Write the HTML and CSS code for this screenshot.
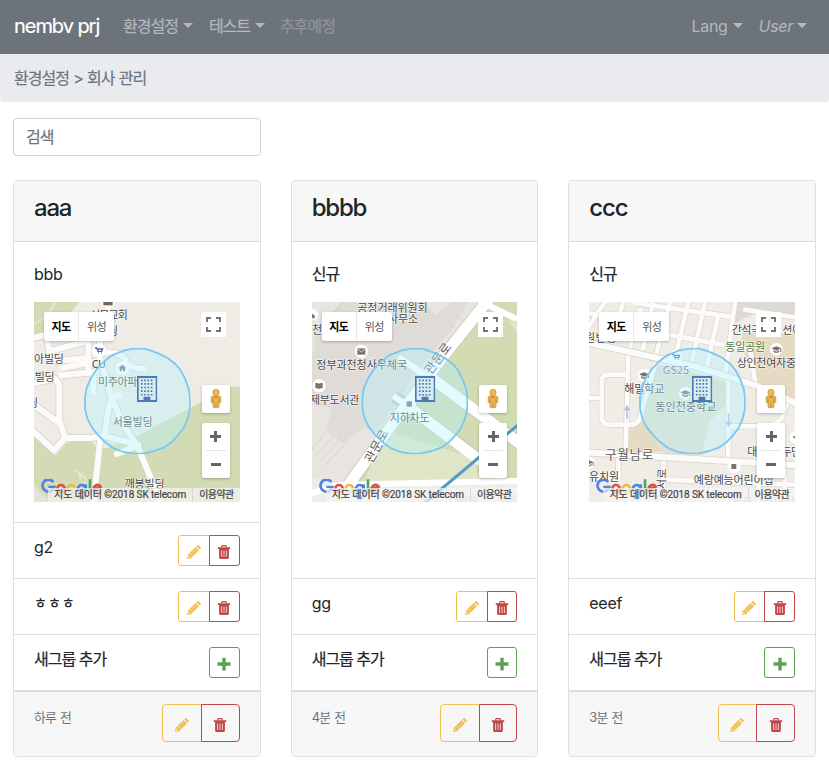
FILE: index.html
```html
<!DOCTYPE html>
<html lang="ko">
<head>
<meta charset="utf-8">
<title>nembv prj</title>
<link rel="stylesheet" href="styles.css">
</head>
<body>
<svg class="sprite" width="0" height="0" aria-hidden="true">
  <symbol id="pencil" viewBox="0 0 14 14"><path fill="currentColor" d="M0 14l.8-4.300L3 8l3 3-1.700 2.300zM2.900 7.600L8.700 2l3.300 3.300-5.700 5.700zM9.400 1.400L10.500.3q.5-.5 1.100 0L13.700 2.400q.5.600 0 1.200L12.700 4.600z"/><path d="M4.400 8.900L10 3.500" stroke="#fff" stroke-width=".5" opacity=".55"/><circle cx="1.900" cy="12" r=".8" fill="#fff"/></symbol>
  <symbol id="trash" viewBox="0 0 14 14"><path fill="none" stroke="currentColor" stroke-width="1.200" d="M4.700 2.500V1.400Q4.700.7 5.400.7H8.600Q9.300.7 9.300 1.400V2.500"/><path fill="currentColor" d="M.8 2.300H13.200V4.100H.8zM2.100 4.100H11.900V12.600Q11.900 14 10.600 14H3.400Q2.100 14 2.100 12.600z"/><path d="M4.600 5.500V12M7 5.500V12M9.400 5.500V12" stroke="#fff" stroke-width="1" opacity=".75"/></symbol>
  <symbol id="plus" viewBox="0 0 14 14"><path fill="currentColor" d="M5.300.8h3.400v4.500h4.800v3.400H8.700v4.800H5.300V8.700H.5V5.300h4.800z"/></symbol>
  <symbol id="full" viewBox="0 0 25 25"><path fill="none" stroke="#757575" stroke-width="2" d="M6 10V6h4M15 6h4v4M19 15v4h-4M10 19H6v-4"/></symbol>
  <symbol id="pegman" viewBox="0 0 28 28"><path fill="#e9b44c" stroke="#bd8a3c" stroke-width=".6" d="M10.600 11h6.800q1.400 0 1.400 1.600v5h-1.500l-.5 5h-5.600l-.5-5H9.200v-5q0-1.600 1.400-1.600z"/><path d="M14 17.500v5M11.100 13.500v4M16.900 13.500v4" stroke="#b37e34" stroke-width=".7"/><path d="M11.700 11.300l2.300 2.200 2.300-2.200" fill="#dd7c37"/><circle cx="14" cy="7.400" r="3.200" fill="#ecb955" stroke="#bd8a3c" stroke-width=".6"/></symbol>
  <symbol id="glogo" viewBox="0 0 186 66"><g fill="none" stroke-width="8"><path stroke="#4e82e8" d="M38 9A18 18 0 1 0 41 24H23"/><circle cx="61" cy="29" r="11" stroke="#dc5145"/><circle cx="92" cy="29" r="11" stroke="#edbb3c"/><path stroke="#4e82e8" d="M135 16v28q0 13-12 13-9 0-12-8"/><circle cx="123" cy="29" r="11" stroke="#4e82e8"/><path stroke="#4ca85b" d="M148 1v41"/><path stroke="#dc5145" d="M158 32l22-9q-5-7-12-5-10 4-9 14 3 9 12 8 7-1 10-7"/></g></symbol>
  <symbol id="area" viewBox="0 0 320 320"><path d="M121 8L149 3H181L205 10L229 20L251 31L274 49L290 68L303 93L314 123L318 150V183L311 213L299 241L282 263L262 284L239 300L211 310L180 317L149 318L118 313L89 302L64 284L43 263L24 240L10 213L3 182L3 149L8 120L21 91L38 65L58 43L82 24z" fill="#b2f4ff" fill-opacity=".36" stroke="#7bc7f2" stroke-width="5.500" stroke-linejoin="round"/></symbol>
  <symbol id="building" viewBox="0 0 62 80"><path fill="#4a7bb4" d="M0 0h62v80H0z"/><path fill="#d9edf0" d="M5 7h52v67H41V64H20v10H5z"/><path stroke="#4c72b0" stroke-width="5" stroke-dasharray="5 5" d="M12 14h40M12 25h40M12 36h40M12 47h40M12 58h40"/><path fill="#4a7bb4" d="M23 66h15v9H23z"/></symbol>
  <symbol id="cap" viewBox="0 0 40 40"><circle cx="20" cy="20" r="19" fill="#fff"/><path fill="#80706a" d="M5 17L20 11 35 17 20 24zM11 22l9 5 9-5v5q-9 7-18 0zM32 18h3v10h-3z"/></symbol>
</svg>

<nav class="navbar">
  <a class="brand">nembv prj</a>
  <div class="menu">
    <a class="link ko drop">환경설정</a>
    <a class="link ko drop">테스트</a>
    <a class="link ko off">추후예정</a>
  </div>
  <div class="menu end">
    <a class="link drop">Lang</a>
    <a class="link drop user"><i>User</i></a>
  </div>
</nav>
<div class="crumb ko">환경설정 &gt; 회사 관리</div>

<main>
  <input class="search ko" type="text" placeholder="검색">
  <section class="deck">

    <article class="card">
      <header><h4>aaa</h4></header>
      <div class="body">
        <p>bbb</p>
        <div class="map">
          <svg class="canvas" viewBox="12 12 617 600" preserveAspectRatio="none">
            <path fill="#efece6" d="M0 0h640v620H0z"/>
            <path fill="#d2dbb3" d="M12 12H148L100 68 12 128zM640 266H600L320 415 230 450H205L170 418 108 436 76 474 12 415V620H640z"/>
            <path fill="none" stroke="#dfe3cb" stroke-width="8" d="M75 12Q55 60 12 78"/>
            <path fill="#e2e1da" d="M12 560l50 52H12z"/>
            <path class="edge" d="M238 12L205 160 225 235 245 300 275 370 325 450 395 620M215 165Q262 158 285 182 290 210 340 212M0 124L50 110 58 160 175 128V225M50 112L110 92M62 168L80 190 170 180M98 210L200 190M95 232L195 222M12 255L75 242 88 260V365L105 420H185L225 412M12 320L87 375M0 390L72 458 105 420M190 620L210 430M190 225V280M245 300Q230 340 225 415L325 440"/>
            <path class="way" d="M238 12L205 160 225 235 245 300 275 370 325 450 395 620M215 165Q262 158 285 182 290 210 340 212M0 124L50 110 58 160 175 128V225M50 112L110 92M62 168L80 190 170 180M98 210L200 190M95 232L195 222M12 255L75 242 88 260V365L105 420H185L225 412M12 320L87 375M0 390L72 458 105 420M190 620L210 430M190 225V280M245 300Q230 340 225 415L325 440M245 294L268 292M260 468L325 442"/>
            <path fill="none" stroke="#e7e9d5" stroke-width="5" d="M135 515L170 545M150 545V530M160 550L205 580"/>
            <circle cx="234" cy="12" r="20" fill="#fff"/><path fill="#79615c" d="M220 8h28v14H220z"/>
            <circle cx="206" cy="157" r="21" fill="#fff"/><path d="M195 150h5l4 10h11l3-7h-16M204 165h2m8 0h2" fill="none" stroke="#5364b5" stroke-width="4"/>
            <circle cx="277" cy="210" r="20" fill="#fff"/><path fill="#777" d="M265 211l12-11 12 11h-4v9h-6v-7h-4v7h-6v-9z"/>
            <g class="label"><text x="180" y="63" textLength="114">서문교회</text><text x="234" y="110">딩</text><text x="12" y="194" textLength="90">아빌딩</text><text x="14" y="248" textLength="60">빌딩</text><text x="-6" y="326">딩</text><text x="185" y="210" textLength="43">CU</text><text x="204" y="264" textLength="147">미주아파트</text><text x="248" y="385" textLength="120">서울빌딩</text><text x="284" y="569" textLength="120">깨봉빌딩</text></g>
            <use href="#area" x="162" y="149" width="320" height="320"/>
            <use href="#building" x="321" y="233" width="61" height="79"/>
            <use href="#glogo" x="32" y="543" width="186" height="66"/>
          </svg>
          <div class="types"><b>지도</b><span>위성</span></div>
          <svg class="full"><use href="#full"/></svg>
          <svg class="peg"><use href="#pegman"/></svg>
          <div class="zoom"><i></i><i></i></div>
          <div class="legal"><span>지도 데이터 ©2018 SK telecom</span><span>이용약관</span></div>
        </div>
      </div>
      <ul>
        <li><span>g2</span><div class="group"><button class="edit"><svg><use href="#pencil"/></svg></button><button class="del"><svg><use href="#trash"/></svg></button></div></li>
        <li><span class="jamo">ㅎㅎㅎ</span><div class="group"><button class="edit"><svg><use href="#pencil"/></svg></button><button class="del"><svg><use href="#trash"/></svg></button></div></li>
        <li><span class="ko">새그룹 추가</span><button class="add"><svg><use href="#plus"/></svg></button></li>
      </ul>
      <footer><small>하루 전</small><div class="group large"><button class="edit"><svg><use href="#pencil"/></svg></button><button class="del"><svg><use href="#trash"/></svg></button></div></footer>
    </article>

    <article class="card">
      <header><h4>bbbb</h4></header>
      <div class="body">
        <p class="ko">신규</p>
        <div class="map">
          <svg class="canvas" viewBox="12 12 617 600" preserveAspectRatio="none">
            <path fill="#e8e5e0" d="M0 0h640v620H0z"/>
            <path fill="#dfdbd7" d="M30 80L105 12H480L435 90 350 190 305 250 275 310 200 400 165 390 105 435 55 400 70 330 12 320V180z"/>
            <path fill="#e8e5e0" d="M340 12l45 40 45-40zM12 330l60 15-28 48 52 45-75 75z"/>
            <path fill="#d2dbb1" d="M535 12H640V545L110 600 230 400 330 290 380 220z"/>
            <path fill="#dfe5c7" d="M235 400L500 480 515 550 150 590zM600 70h40v50z"/>
            <path fill="#efede8" d="M12 540L120 560 640 545V620H12z"/>
            <g fill="none" stroke="#cfccc5" stroke-width="2"><path d="M12 455l40-50M22 475l55-60M35 490l65-70M48 505l75-80M430 40l40 35M410 65l35 30M225 12l55 70M105 12L40 90M140 115L190 140"/></g>
            <path fill="none" stroke="#c9c8be" stroke-width="38" d="M545 0L410 170 270 355 100 590M370 240L640 440M260 295L510 480"/>
            <path fill="none" stroke="#fff" stroke-width="33" d="M545 0L410 170 270 355 100 590M370 240L640 440M300 325L520 490"/>
            <path fill="none" stroke="#fff" stroke-width="18" stroke-linecap="round" d="M278 182L380 250M262 298L310 330M12 585L100 560 640 548M520 12L620 60"/>
            <path stroke="#519bc6" stroke-width="9" d="M350 615L640 372"/>
            <path fill="#cad5f4" d="M440 595h70v17h-70zM580 590h48v22h-48z"/>
            <circle cx="160" cy="160" r="20" fill="#fff"/><path fill="#80706a" d="M148 151h24v19h-24z"/><path fill="none" stroke="#fff" stroke-width="2" d="M149 153l11 9 11-9"/>
            <circle cx="33" cy="263" r="20" fill="#fff"/><path fill="#80706a" d="M22 255q8-1 11 2 4-3 11-2v16q-7-1-11 2-4-3-11-2z"/>
            <circle cx="14" cy="50" r="17" fill="#fff"/><path fill="#80706a" d="M12 47l8 5v9h-8z"/>
            <circle cx="304" cy="318" r="20" fill="#fff"/><path fill="#777" d="M296 310h16v16h-16z"/>
            <g class="label"><text x="148" y="42" textLength="211">공정거래위원회</text><text x="240" y="76" textLength="90">사무소</text><text x="12" y="107">천</text><text x="25" y="214" textLength="272">정부과천청사우체국</text><text x="6" y="317" textLength="148">제부도서관</text><text x="245" y="371" textLength="120">지하차도</text><text class="road" transform="translate(368 232) rotate(-53)" textLength="107">관문로</text><text class="road" transform="translate(192 498) rotate(-62)" textLength="107">관문로</text></g>
            <use href="#area" x="160" y="149" width="320" height="320"/>
            <use href="#building" x="321" y="233" width="61" height="79"/>
            <use href="#glogo" x="32" y="543" width="186" height="66"/>
          </svg>
          <div class="types"><b>지도</b><span>위성</span></div>
          <svg class="full"><use href="#full"/></svg>
          <svg class="peg"><use href="#pegman"/></svg>
          <div class="zoom"><i></i><i></i></div>
          <div class="legal"><span>지도 데이터 ©2018 SK telecom</span><span>이용약관</span></div>
        </div>
      </div>
      <ul>
        <li><span>gg</span><div class="group"><button class="edit"><svg><use href="#pencil"/></svg></button><button class="del"><svg><use href="#trash"/></svg></button></div></li>
        <li><span class="ko">새그룹 추가</span><button class="add"><svg><use href="#plus"/></svg></button></li>
      </ul>
      <footer><small>4분 전</small><div class="group large"><button class="edit"><svg><use href="#pencil"/></svg></button><button class="del"><svg><use href="#trash"/></svg></button></div></footer>
    </article>

    <article class="card">
      <header><h4>ccc</h4></header>
      <div class="body">
        <p class="ko">신규</p>
        <div class="map">
          <svg class="canvas" viewBox="12 12 617 600" preserveAspectRatio="none">
            <path fill="#f0ede7" d="M0 0h640v620H0z"/>
            <path fill="#e4dbc2" d="M145 170L210 185 200 300 170 370 130 385V462H250L350 462 375 370 430 310V255L300 215 225 200zM470 105L640 105V305L520 260 470 150z"/>
            <path fill="#e3dfcd" d="M225 205L385 260 430 290 375 370 350 470H240L200 420 175 340 205 250z"/>
            <path fill="#dddad5" d="M440 12H640V60L520 40 440 80z"/>
            <path class="edge thin" d="M12 45L50 55M60 12L12 85M115 12L75 140M165 40L135 150M205 12L175 150M255 12L215 165M310 12L270 180M360 12L320 195M400 50L365 210M450 12L420 235M150 15L430 55M90 55L240 90M250 110L410 140M210 200L170 340Q165 378 140 380H75Q48 380 50 350V250Q50 230 70 230H125M12 300H50M130 165L122 460M430 250V480M440 385H540Q575 380 590 360L610 310M480 35L640 60M430 140L495 155 510 250M235 480V612M520 495V612M12 535L75 545M245 545L629 560M100 480V540M600 510V612"/>
            <path class="way thin" d="M12 45L50 55M60 12L12 85M115 12L75 140M165 40L135 150M205 12L175 150M255 12L215 165M310 12L270 180M360 12L320 195M400 50L365 210M450 12L420 235M150 15L430 55M90 55L240 90M250 110L410 140M210 200L170 340Q165 378 140 380H75Q48 380 50 350V250Q50 230 70 230H125M12 300H50M130 165L122 460M430 250V480M440 385H540Q575 380 590 360L610 310M480 35L640 60M430 140L495 155 510 250M235 480V612M520 495V612M12 535L75 545M245 545L629 560M100 480V540M600 510V612"/>
            <path class="edge" d="M0 132L330 205 520 265 640 320M0 463L640 502"/>
            <path class="way" d="M0 132L330 205 520 265 640 320M0 463L640 502"/>
            <path fill="none" stroke="#b4bde4" stroke-width="5" d="M126 362v-35m-7 10l7-11 7 11M431 345v37m-7-10l7 11 7-11"/>
            <use href="#cap" x="157" y="212" width="40" height="40"/><use href="#cap" x="281" y="266" width="40" height="40"/><use href="#cap" x="554" y="134" width="40" height="40"/><use href="#cap" x="-9" y="475" width="40" height="40"/>
            <circle cx="272" cy="176" r="20" fill="#fff"/><path d="M261 169h5l4 10h11l3-7h-16M270 184h2m8 0h2" fill="none" stroke="#5364b5" stroke-width="4"/>
            <circle cx="447" cy="505" r="20" fill="#fff"/><path fill="#80706a" d="M439 498h15v15h-15z"/>
            <circle cx="635" cy="418" r="20" fill="#fff"/><path fill="#80706a" d="M623 417l10-5v12z"/>
            <g class="label"><text x="0" y="131" textLength="94">원빈딩</text><text x="440" y="109" textLength="88">간석극</text><text x="592" y="109" textLength="60">션어</text><text class="park" x="421" y="160" textLength="119">동일공원</text><text x="455" y="207" textLength="178">상인천여자중</text><text class="shop" x="233" y="228" textLength="79">GS25</text><text x="118" y="284" textLength="120">해밀학교</text><text x="211" y="339" textLength="183">동인천중학교</text><text class="road" x="60" y="482" textLength="145">구월남로</text><text x="487" y="473">대</text><text x="590" y="473" textLength="58">두먼</text><text x="12" y="549" textLength="90">유치원</text><text x="326" y="558" textLength="240">예랑예능어린이집</text><text transform="translate(241 574) rotate(-88)" textLength="62">서로</text><text class="faint" x="441" y="624" textLength="188">부오그레이리</text></g>
            <use href="#area" x="162" y="149" width="320" height="320"/>
            <use href="#building" x="321" y="233" width="61" height="79"/>
            <use href="#glogo" x="32" y="543" width="186" height="66"/>
          </svg>
          <div class="types"><b>지도</b><span>위성</span></div>
          <svg class="full"><use href="#full"/></svg>
          <svg class="peg"><use href="#pegman"/></svg>
          <div class="zoom"><i></i><i></i></div>
          <div class="legal"><span>지도 데이터 ©2018 SK telecom</span><span>이용약관</span></div>
        </div>
      </div>
      <ul>
        <li><span>eeef</span><div class="group"><button class="edit"><svg><use href="#pencil"/></svg></button><button class="del"><svg><use href="#trash"/></svg></button></div></li>
        <li><span class="ko">새그룹 추가</span><button class="add"><svg><use href="#plus"/></svg></button></li>
      </ul>
      <footer><small>3분 전</small><div class="group large"><button class="edit"><svg><use href="#pencil"/></svg></button><button class="del"><svg><use href="#trash"/></svg></button></div></footer>
    </article>
  </section>
</main>
</body>
</html>
```
FILE: styles.css
```css
* { box-sizing: border-box; }
body { margin: 0; background: #fff; color: #212529; font: 16px/24px Inter, "Noto Sans CJK KR", sans-serif; letter-spacing: -.3px; overflow: hidden; }
.sprite { position: absolute; }
.ko { letter-spacing: -1px; -webkit-text-stroke: .2px; }
.jamo { font-size: 14px; font-weight: 500; letter-spacing: 1px; }

.navbar { display: flex; align-items: center; height: 54px; padding: 0 22px 2px 14px; background: #6c737b; }
.brand { width: 109px; color: #fff; font-size: 20px; letter-spacing: -1.050px; white-space: nowrap; -webkit-text-stroke: .2px; }
.menu { display: flex; gap: 16px; }
.menu.end { margin-left: auto; }
.link { color: #b5b9bd; white-space: nowrap; }
.off { color: #90959b; margin-left: -1px; }
.drop::after { content: ""; display: inline-block; margin-left: 5px; vertical-align: 4px; border: 5px solid transparent; border-top-color: currentColor; border-bottom: 0; }
.user::after { margin-left: 4px; }

.crumb { height: 48px; padding: 12px 14px; background: #e9ebef; border-radius: 0 0 4px 4px; color: #6c757d; word-spacing: .8px; }

main { padding: 16px 13px 0; }
.search { display: block; width: 248px; height: 38px; margin: 0 0 24px; padding: 6px 12px; border: 1px solid #ced4da; border-radius: 4px; font-family: inherit; font-size: 16px; background: #fff; }
.search::placeholder { color: #6c757d; opacity: 1; }

.deck { display: grid; grid-template-columns: repeat(3, 1fr); gap: 30px; height: 577px; }
.card { display: flex; flex-direction: column; min-width: 0; border: 1px solid #dfdfdf; border-radius: 4px; overflow: hidden; }
.card header { height: 61px; padding: 12px 20px; background: #f7f7f7; border-bottom: 1px solid #dadbdb; }
h4 { margin: 0; font-size: 24px; line-height: 29px; font-weight: 500; letter-spacing: -1.200px; }
.body { flex: 1; padding: 20px 20px 0; }
.body p { margin: 0 0 16px; }

.map { position: relative; height: 200px; overflow: hidden; letter-spacing: 0; }
.canvas { display: block; width: 100%; height: 200px; }
.edge, .way { fill: none; stroke-linejoin: round; }
.edge { stroke: #d8d3cc; stroke-width: 23px; }
.way { stroke: #fcfbfa; stroke-width: 18px; stroke-linecap: round; }
.edge.thin { stroke-width: 18px; }
.way.thin { stroke-width: 14px; }
.label { font: 33px "Noto Sans CJK KR", sans-serif; fill: #484848; stroke: rgba(255,255,255,.7); stroke-width: 4px; paint-order: stroke; }
.road { font-size: 38px; fill: #5a5a5a; }
.park { fill: #527b48; }
.shop { fill: #5c6d95; }
.faint { opacity: .4; }
.types, .full, .peg, .zoom, .legal { position: absolute; }
.types { left: 10px; top: 10px; display: flex; height: 29px; background: #fff; border-radius: 2px; box-shadow: 0 1px 3px rgba(0,0,0,.25); font: 11px/28px "Noto Sans CJK KR", sans-serif; text-align: center; letter-spacing: -.6px; }
.types b { width: 34px; color: #000; }
.types span { width: 36px; color: #565656; border-left: 1px solid #e8e8e8; }
.full { right: 14px; top: 10px; width: 25px; height: 25px; background: #fff; }
.peg { right: 10px; top: 83px; width: 28px; height: 28px; background: #fff; border-radius: 2px; box-shadow: 0 1px 3px rgba(0,0,0,.25); }
.zoom { right: 10px; top: 121px; width: 28px; height: 55px; padding: 0 4px; background: #fff; border-radius: 2px; box-shadow: 0 1px 3px rgba(0,0,0,.25); }
.zoom i { display: block; height: 27px; background: linear-gradient(#666, #666) center/10px 3px no-repeat; }
.zoom i:first-child { height: 28px; border-bottom: 1px solid #e6e6e6; background: linear-gradient(#666, #666) center/11px 3px no-repeat, linear-gradient(#666, #666) center/3px 11px no-repeat; }
.legal { right: 0; bottom: 0; display: flex; font: 10px/14px Roboto, "Noto Sans CJK KR", sans-serif; color: #444; white-space: nowrap; }
.legal span { height: 14px; padding: 0 6px; background: rgba(245,245,245,.7); letter-spacing: -.1px; -webkit-text-stroke: .2px; }
.legal span:last-child { border-left: 1px solid rgba(200,200,200,.6); letter-spacing: -.6px; }

ul { margin: 0; padding: 0; list-style: none; border-bottom: 1px solid #dfdfdf; }
li { display: flex; justify-content: space-between; height: 56px; padding: 12px 20px 0; border-top: 1px solid #dfdfdf; }
button { display: flex; align-items: center; justify-content: center; width: 31px; height: 31px; margin: 0; padding: 2px 0 0; border: 1px solid; border-radius: 3px; background: transparent; }
button svg { width: 14px; height: 14px; }
.group { display: flex; }
.edit { width: 31.600px; color: #f0c050; border-radius: 3px 0 0 3px; }
.del { width: 30.800px; margin-left: -1px; color: #c04848; border-radius: 0 3px 3px 0; }
.add { width: 30.600px; color: #5ca052; }
.large button { width: 38.700px; height: 38px; padding-top: 4px; }
.large .edit { width: 39.800px; border-radius: 4px 0 0 4px; }
.large .del { border-radius: 0 4px 4px 0; }
.card footer { display: flex; justify-content: space-between; height: 65px; padding: 12px 20px 0; background: #f7f7f7; border-top: 1px solid #dadbdb; }
small { margin-top: 2px; font-size: 12.800px; color: #6c757d; letter-spacing: -.7px; word-spacing: 1px; }
```
